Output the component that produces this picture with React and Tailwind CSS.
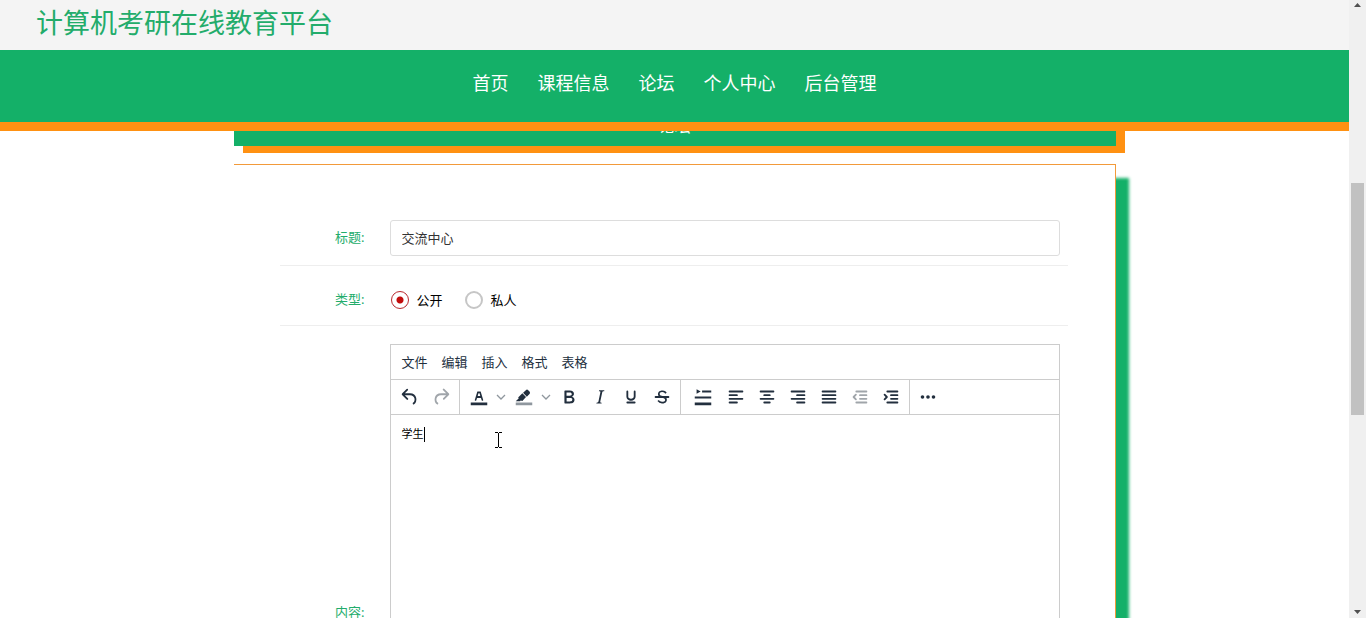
import { useState } from "react";

const navLinks = ["首页", "课程信息", "论坛", "个人中心", "后台管理"];
const editorMenus = ["文件", "编辑", "插入", "格式", "表格"];

const icons = {
  undo: "M6.4 8H12c3.7 0 6.2 2 6.8 5.1.6 2.7-.4 5.6-2.3 6.8a1 1 0 01-1-1.8c1.1-.6 1.8-2.7 1.4-4.6-.5-2.1-2.1-3.5-4.9-3.5H6.4l3.3 3.3a1 1 0 11-1.4 1.4l-5-5a1 1 0 010-1.4l5-5a1 1 0 011.4 1.4L6.4 8z",
  redo: "M17.6 10H12c-2.8 0-4.4 1.4-4.9 3.5-.4 2 .3 4 1.4 4.6a1 1 0 11-1 1.8c-2-1.2-2.9-4.1-2.3-6.8.6-3 3-5.1 6.8-5.1h5.6l-3.3-3.3a1 1 0 111.4-1.4l5 5a1 1 0 010 1.4l-5 5a1 1 0 01-1.4-1.4l3.3-3.3z",
  color:
    "M3 18h18v3H3zM8.7 16h-.8a.5.5 0 01-.5-.6l2.7-9c.1-.3.3-.4.5-.4h2.8c.2 0 .4.1.5.4l2.7 9a.5.5 0 01-.5.6h-.8a.5.5 0 01-.4-.4l-.7-2.2c0-.3-.3-.4-.5-.4h-3.4c-.2 0-.4.1-.5.4l-.7 2.2c0 .3-.2.4-.4.4zm2.6-7.6l-.6 2a.5.5 0 00.5.6h1.6a.5.5 0 00.5-.6l-.6-2c0-.3-.3-.4-.5-.4h-.4c-.2 0-.4.1-.5.4z",
  highlight:
    "M7.7 16.7H3l3.3-3.3-.7-.8L10.2 8l4 4.1-4 4.2c-.2.2-.6.2-.8 0l-.6-.7-1.1 1.1zm5-7.5L11 7.4l3-2.9a2 2 0 012.6 0L18 6c.7.7.7 2 0 2.7l-2.9 2.9-1.8-1.8-.5-.6",
  bold: "M7.8 19c-.3 0-.5 0-.6-.2l-.2-.5V5.7c0-.2 0-.4.2-.5l.6-.2h5c1.5 0 2.7.3 3.5 1 .7.6 1.1 1.4 1.1 2.5a3 3 0 01-.6 1.9c-.4.6-1 1-1.6 1.2.4.1.9.3 1.3.6s.8.7 1 1.2c.4.4.5 1 .5 1.6 0 1.3-.4 2.3-1.3 3-.8.7-2.1 1-3.8 1H7.8zm5-8.3c.6 0 1.2-.1 1.6-.5.4-.3.6-.7.6-1.3 0-1.1-.8-1.7-2.3-1.7H9.3v3.5h3.4zm.5 6c.7 0 1.3-.1 1.7-.4.4-.4.6-.9.6-1.5s-.2-1-.7-1.4c-.4-.3-1-.4-2-.4H9.4v3.8h4z",
  italic:
    "M16.7 4.7l-.1.9h-.3c-.6 0-1 0-1.4.3-.3.3-.4.6-.5 1.1l-2.1 9.8v.6c0 .5.4.8 1.4.8h.2l-.2.8H8l.2-.8h.2c1.1 0 1.8-.5 2-1.5l2-9.8.1-.5c0-.6-.4-.8-1.4-.8h-.3l.2-.9h5.8z",
  underline:
    "M16 5c.6 0 1 .4 1 1v5.5a4 4 0 01-.4 1.8l-1 1.4a5.3 5.3 0 01-5.5 1 5 5 0 01-1.6-1c-.5-.4-.8-.9-1.1-1.4a4 4 0 01-.4-1.8V6c0-.6.4-1 1-1s1 .4 1 1v5.5c0 .3 0 .6.2 1l.6.7a3.3 3.3 0 002.2.8 3.4 3.4 0 002.2-.8c.3-.2.4-.5.6-.8l.2-.9V6c0-.6.4-1 1-1zM8 17h8c.6 0 1 .4 1 1s-.4 1-1 1H8a1 1 0 010-2z",
  strike:
    "M15.6 8.5c-.5-.7-1-1.1-1.3-1.3-.6-.4-1.3-.6-2-.6-2.7 0-2.8 1.7-2.8 2.1 0 1.6 1.8 2 3.2 2.3 4.4.9 4.6 2.8 4.6 3.9 0 1.4-.7 4.1-5 4.1A6.2 6.2 0 017 16.4l1.5-1.1c.4.6 1.6 2 3.7 2 1.6 0 2.5-.4 3-1.2.4-.8.3-2-.8-2.6-.7-.4-1.6-.7-2.9-1-1-.2-3.9-.8-3.9-3.6C7.6 6 10.3 5 12.4 5c2.9 0 4.2 1.6 4.7 2.4l-1.5 1.1zM5 11h14a1 1 0 010 2H5a1 1 0 010-2z",
  firstLine: "M5 3.5l4.500 2.500L5 8.500zM11 5h10v2H11zM3 11.500h18v2H3zM3 18h18v3H3z",
  more: "M6 10a2 2 0 100 4 2 2 0 000-4zm12 0a2 2 0 100 4 2 2 0 000-4zm-6 0a2 2 0 100 4 2 2 0 000-4z",
};

const lineIcons = {
  left: "M5 6h14M5 10h8M5 14h14M5 18h8",
  center: "M5 6h14M9 10h6M5 14h14M9 18h6",
  right: "M5 6h14M11 10h8M5 14h14M11 18h8",
  justify: "M5 6h14M5 10h14M5 14h14M5 18h14",
  outdent: "M8 6h11M12 10h7M12 14h7M8 18h11M7.5 9.5L5 12l2.5 2.5",
  indent: "M8 6h11M12 10h7M12 14h7M8 18h11M5 9.5L7.5 12 5 14.5",
};

function ToolButton({ icon, label, disabled = false }) {
  return (
    <button
      type="button"
      aria-label={label}
      disabled={disabled}
      className="text-[#222f3e] disabled:text-[#a0a5aa]"
    >
      <svg viewBox="0 0 24 24" className="block h-[22px] w-[22px]" fill="currentColor">
        {icon === "highlight" && <path d="M3 18h18v3H3z" fill="#8f979e" />}
        {icons[icon] ? (
          <path d={icons[icon]} />
        ) : (
          <path
            d={lineIcons[icon]}
            fill="none"
            stroke="currentColor"
            strokeWidth="2"
            strokeLinecap="round"
            strokeLinejoin="round"
          />
        )}
      </svg>
    </button>
  );
}

function SplitButton({ icon, label }) {
  return (
    <div className="flex items-center gap-1.5">
      <ToolButton icon={icon} label={label} />
      <button type="button" aria-label={`${label}选项`} className="text-[#8f979e]">
        <svg viewBox="0 0 10 10" className="block h-2.5 w-2.5" fill="none" stroke="currentColor" strokeWidth="1.3">
          <path d="M1 3l4 4 4-4" />
        </svg>
      </button>
    </div>
  );
}

function RadioOption({ label, value, selected, onChange }) {
  const checked = selected === value;
  return (
    <label className="flex items-center gap-2 text-[13px] leading-5 text-black">
      <input
        type="radio"
        name="type"
        value={value}
        checked={checked}
        onChange={() => onChange(value)}
        className="h-[18px] w-[18px] appearance-none rounded-full border-2 border-[#c6c6c6] bg-white checked:border checked:border-[#b8292f] checked:bg-[radial-gradient(circle,#c20c0c_3px,#fff_4px)]"
      />
      {label}
    </label>
  );
}

function ScrollBar() {
  return (
    <div aria-hidden="true" className="flex w-[17px] shrink-0 flex-col items-center bg-[#f0f0f0]">
      <svg viewBox="0 0 17 17" className="h-[17px] w-[17px]" fill="#505050">
        <path d="M5 7l3.500-4L12 7z" />
      </svg>
      <div className="mt-[166px] h-[232px] w-[13px] bg-[#c1c1c1]" />
      <svg viewBox="0 0 17 17" className="mt-auto h-[17px] w-[17px]" fill="#505050">
        <path d="M5 9h7l-3.500 4z" />
      </svg>
    </div>
  );
}

export default function App() {
  const [title, setTitle] = useState("交流中心");
  const [type, setType] = useState("公开");

  return (
    <div className="flex h-screen overflow-hidden bg-white font-['Noto_Sans','Noto_Sans_CJK_SC',sans-serif]">
      <div className="min-w-0 flex-1">
        <header className="relative z-10">
          <div className="flex h-[50px] items-center bg-[#f4f4f4] px-9 pb-1">
            <h1 className="text-[27px] leading-9 text-[#23ac6b]">计算机考研在线教育平台</h1>
          </div>
          <nav className="flex h-[81px] items-center justify-center gap-[29px] border-b-9 border-[#ff9112] bg-[#14b068] pb-1.5">
            {navLinks.map((name) => (
              <a key={name} href="#" className="text-lg text-white">
                {name}
              </a>
            ))}
          </nav>
        </header>
        <main className="mx-auto max-w-[882px]">
          <h2 className="-mt-[25px] flex h-10 items-center justify-center bg-[#14b068] text-base text-white shadow-[9px_7px_0_#ff9112]">
            论坛
          </h2>
          <form className="mt-[18px] border-t border-r border-[#f29a3a] pt-[55px] pr-[47px] pl-[46px] shadow-[13px_14px_3px_#14b068]">
            <div className="flex items-center border-b border-[#eeeeee] pr-2 pb-[9px]">
              <label htmlFor="title" className="w-[110px] shrink-0 pr-[25px] pb-0.5 text-right text-[13px] leading-5 text-[#23ac6b]">
                标题:
              </label>
              <input
                id="title"
                type="text"
                value={title}
                onChange={(event) => setTitle(event.target.value)}
                className="h-9 min-w-0 flex-1 rounded-[3px] border border-[#dddddd] px-[11px] pb-0.5 text-[13px] text-[#333333] outline-none"
              />
            </div>
            <div
              role="radiogroup"
              aria-labelledby="type-label"
              className="flex h-[60px] items-center border-b border-[#eeeeee] pt-2"
            >
              <span id="type-label" className="w-[110px] shrink-0 pr-[25px] pb-0.5 text-right text-[13px] leading-5 text-[#23ac6b]">
                类型:
              </span>
              <div className="flex gap-[22px] pl-px">
                <RadioOption label="公开" value="公开" selected={type} onChange={setType} />
                <RadioOption label="私人" value="私人" selected={type} onChange={setType} />
              </div>
            </div>
            <div className="flex items-center pt-[18px] pr-2">
              <span id="content-label" className="w-[110px] shrink-0 pr-[25px] text-right text-[13px] leading-5 text-[#23ac6b]">
                内容:
              </span>
              <div className="min-w-0 flex-1 border border-[#cccccc]">
                <div className="flex h-[35px] items-center gap-3.5 border-b border-[#cccccc] px-[11px]">
                  {editorMenus.map((name) => (
                    <button key={name} type="button" className="text-[13px] leading-5 text-[#222f3e]">
                      {name}
                    </button>
                  ))}
                </div>
                <div className="flex h-[35px] border-b border-[#cccccc]">
                  <div className="flex items-center gap-[9px] border-r border-[#cccccc] pr-[7px] pl-2">
                    <ToolButton icon="undo" label="撤销" />
                    <ToolButton icon="redo" label="重做" disabled />
                  </div>
                  <div className="flex items-center gap-[7px] border-r border-[#cccccc] pr-[7px] pl-2">
                    <SplitButton icon="color" label="文字颜色" />
                    <SplitButton icon="highlight" label="背景色" />
                    <div className="flex gap-[9px]">
                      <ToolButton icon="bold" label="粗体" />
                      <ToolButton icon="italic" label="斜体" />
                      <ToolButton icon="underline" label="下划线" />
                      <ToolButton icon="strike" label="删除线" />
                    </div>
                  </div>
                  <div className="flex items-center gap-[11px] border-r border-[#cccccc] pr-[7px] pl-[11px]">
                    <ToolButton icon="firstLine" label="首行缩进" />
                    <div className="flex gap-[9px]">
                      <ToolButton icon="left" label="左对齐" />
                      <ToolButton icon="center" label="居中" />
                      <ToolButton icon="right" label="右对齐" />
                      <ToolButton icon="justify" label="两端对齐" />
                      <ToolButton icon="outdent" label="减少缩进" disabled />
                      <ToolButton icon="indent" label="增加缩进" />
                    </div>
                  </div>
                  <div className="flex items-center pl-[7px]">
                    <ToolButton icon="more" label="更多" />
                  </div>
                </div>
                <div className="relative h-[464px] px-[11px] pt-[9px]">
                  <div
                    role="textbox"
                    aria-labelledby="content-label"
                    aria-multiline="true"
                    className="flex items-center text-[11px] leading-5 text-black"
                  >
                    学生
                    <span className="h-[15px] w-px bg-black" />
                  </div>
                  <svg
                    viewBox="0 0 7 16"
                    aria-hidden="true"
                    className="absolute top-[17px] left-[104px] h-4 w-[7px]"
                    fill="none"
                    stroke="#000"
                    shapeRendering="crispEdges"
                  >
                    <path d="M0 .5h3M4 .5h3M3.500 1v14M0 15.500h3M4 15.500h3" />
                  </svg>
                </div>
              </div>
            </div>
          </form>
        </main>
      </div>
      <ScrollBar />
    </div>
  );
}
